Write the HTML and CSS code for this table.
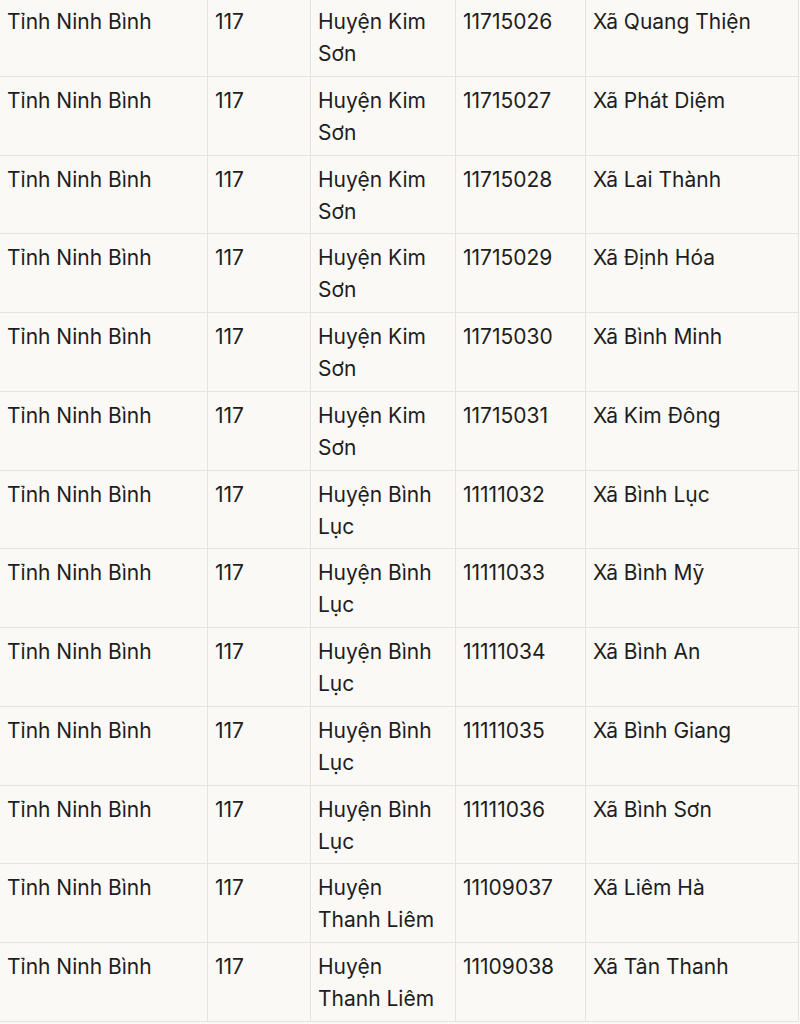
FILE: index.html
```html
<!DOCTYPE html>
<html lang="vi">
<head>
<meta charset="utf-8">
<title>Danh sách xã</title>
<link rel="stylesheet" href="styles.css">
</head>
<body>
<table class="grid">
<colgroup>
<col class="c1"><col class="c2"><col class="c3"><col class="c4"><col class="c5">
</colgroup>
<tbody>
<tr><td>Tỉnh Ninh Bình</td><td>117</td><td>Huyện Kim Sơn</td><td>11715026</td><td>Xã Quang Thiện</td></tr>
<tr><td>Tỉnh Ninh Bình</td><td>117</td><td>Huyện Kim Sơn</td><td>11715027</td><td>Xã Phát Diệm</td></tr>
<tr><td>Tỉnh Ninh Bình</td><td>117</td><td>Huyện Kim Sơn</td><td>11715028</td><td>Xã Lai Thành</td></tr>
<tr><td>Tỉnh Ninh Bình</td><td>117</td><td>Huyện Kim Sơn</td><td>11715029</td><td>Xã Định Hóa</td></tr>
<tr><td>Tỉnh Ninh Bình</td><td>117</td><td>Huyện Kim Sơn</td><td>11715030</td><td>Xã Bình Minh</td></tr>
<tr><td>Tỉnh Ninh Bình</td><td>117</td><td>Huyện Kim Sơn</td><td>11715031</td><td>Xã Kim Đông</td></tr>
<tr><td>Tỉnh Ninh Bình</td><td>117</td><td>Huyện Bình Lục</td><td>11111032</td><td>Xã Bình Lục</td></tr>
<tr><td>Tỉnh Ninh Bình</td><td>117</td><td>Huyện Bình Lục</td><td>11111033</td><td>Xã Bình Mỹ</td></tr>
<tr><td>Tỉnh Ninh Bình</td><td>117</td><td>Huyện Bình Lục</td><td>11111034</td><td>Xã Bình An</td></tr>
<tr><td>Tỉnh Ninh Bình</td><td>117</td><td>Huyện Bình Lục</td><td>11111035</td><td>Xã Bình Giang</td></tr>
<tr><td>Tỉnh Ninh Bình</td><td>117</td><td>Huyện Bình Lục</td><td>11111036</td><td>Xã Bình Sơn</td></tr>
<tr><td>Tỉnh Ninh Bình</td><td>117</td><td>Huyện Thanh Liêm</td><td>11109037</td><td>Xã Liêm Hà</td></tr>
<tr><td>Tỉnh Ninh Bình</td><td>117</td><td>Huyện Thanh Liêm</td><td>11109038</td><td>Xã Tân Thanh</td></tr>
</tbody>
</table>
</body>
</html>
```
FILE: styles.css
```css
html, body {
  margin: 0;
  padding: 0;
  background: #faf9f5;
}
body {
  font-family: Inter, "Noto Sans", sans-serif;
  font-size: 21px;
  line-height: 32px;
  color: #1e1e1e;
  overflow: hidden;
}
.grid {
  border-collapse: collapse;
  table-layout: fixed;
  width: 799px;
  margin: -3px 0 0 -1px;
}
.c1 { width: 208px; }
.c2 { width: 103px; }
.c3 { width: 145px; }
.c4 { width: 130px; }
.c5 { width: 213px; }
.grid td {
  border: 1px solid #e6e4df;
  padding: 8px 7px 5.75px 7px;
  vertical-align: top;
  height: 64px;
  box-sizing: content-box;
}
```
